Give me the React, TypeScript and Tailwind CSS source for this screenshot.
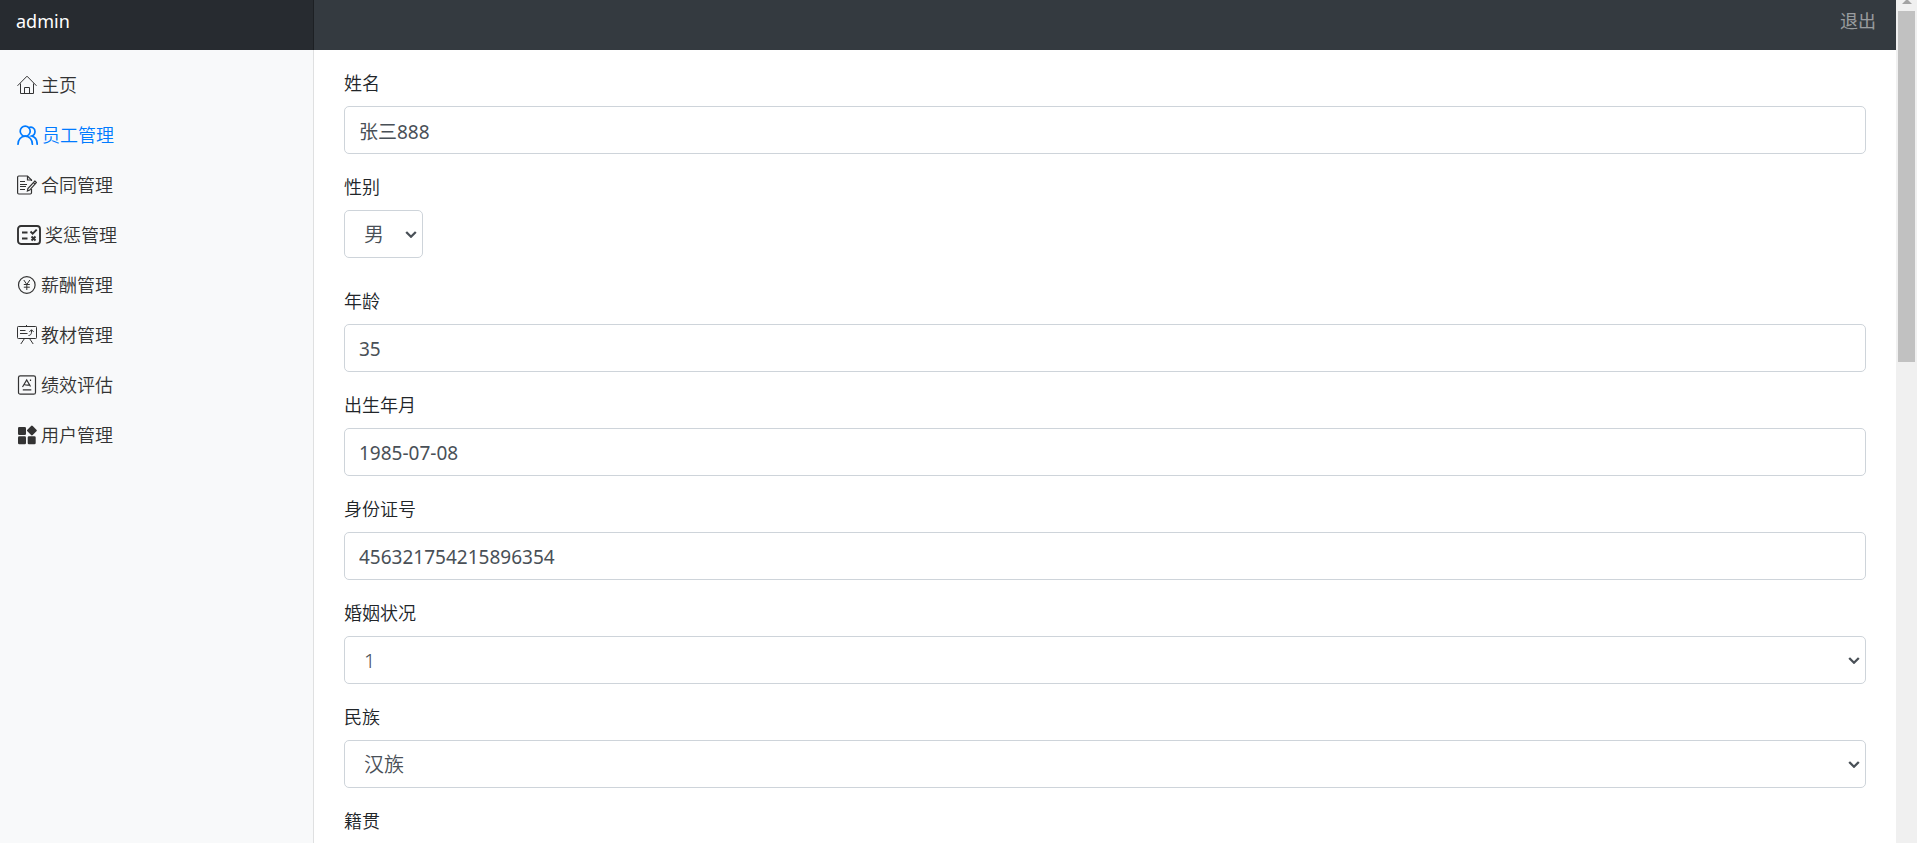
import { clsx } from "clsx";
import { useId, useState } from "react";
import type { ReactNode } from "react";

type NavItem = {
  label: string;
  icon: ReactNode;
  active?: boolean;
};

const HomeIcon = (
  <svg className="h-5 w-5" viewBox="0 0 20 20" fill="none" stroke="currentColor" strokeWidth="1" aria-hidden>
    <path d="M0.5 10.8 10 1.2l9.5 9.6" />
    <path d="M3.5 8.5v10h13v-10" />
    <path d="M7.5 18.5v-6h5v6" />
  </svg>
);

const UsersIcon = (
  <svg className="h-5 w-[21px]" viewBox="0 0 21 20" fill="none" stroke="currentColor" strokeWidth="1.7" strokeLinecap="round" aria-hidden>
    <circle cx="8.2" cy="6.2" r="5" />
    <path d="M1 19.2c0-4.6 3-8 7.2-8s7.2 3.4 7.2 8" />
    <path d="M12 2.5c3-1.2 6 .8 6 3.9 0 2.2-1.3 3.9-3.4 4.6 3.3.8 5.6 3.9 5.6 8.2" />
  </svg>
);

const ContractIcon = (
  <svg className="h-5 w-5" viewBox="0 0 20 20" fill="none" stroke="currentColor" strokeWidth="1.2" aria-hidden>
    <path d="M14.5 6V5l-4-4H1.8C1.1 1 .6 1.5.6 2.2v15.6c0 .7.5 1.2 1.2 1.2h11.5c.7 0 1.2-.5 1.2-1.2V14" />
    <path d="M10.5 1v4h4" />
    <path d="M3 6.5h5M3 9.5h7M3 11.5h6M3 14.5h5" />
    <path d="m17.8 6 1.7 1.5-6.8 7.6-2.3.9.5-2.5z" />
    <path d="m16.4 7.6 1.7 1.5" />
  </svg>
);

const RewardIcon = (
  <svg className="h-5 w-6" viewBox="0 0 24 20" fill="none" stroke="currentColor" strokeWidth="1.9" aria-hidden>
    <rect x="1" y="1" width="22" height="18" rx="3" />
    <path d="M5 7.5h5.5M5 13.5h5.5" />
    <path d="m13.5 6.5 2.2 2.2 4-4" />
    <path d="m14.5 11.5 4 4M18.5 11.5l-4 4" />
  </svg>
);

const SalaryIcon = (
  <svg className="h-5 w-5" viewBox="0 0 20 20" fill="none" stroke="currentColor" strokeWidth="1.2" aria-hidden>
    <circle cx="9.8" cy="10" r="8.3" />
    <path strokeWidth="1" d="M6.8 5 9.8 9.5l3-4.5M9.8 9.5V15M6.8 9.5h6M6.8 12.2h6" />
  </svg>
);

const BoardIcon = (
  <svg className="h-5 w-5" viewBox="0 0 20 20" fill="none" stroke="currentColor" strokeWidth="1" aria-hidden>
    <path d="M9.5 0v2" />
    <rect x="0.5" y="1.5" width="19" height="12" rx="0.8" />
    <path d="M3 5.5h5.5M3 8.5h7.5" />
    <path d="M11.5 10.5c1.8 0 3-1.3 3-3.3V5M12.4 6.9l2.1-2.2 2.1 2.2" />
    <path d="m7.5 13.5-3.7 5.5M12.5 13.5l3.7 5.500" />
  </svg>
);

const ReviewIcon = (
  <svg className="h-5 w-5" viewBox="0 0 20 20" fill="none" stroke="currentColor" strokeWidth="1.2" aria-hidden>
    <rect x="1.5" y="0.8" width="17" height="18.4" rx="1.8" />
    <path d="m5.5 12 4.2-7 3.8 6.5M7.2 9.5c2 .8 4 .8 6 .3M5.8 14.8h8.5M13.5 4.5v1.5" />
  </svg>
);

const AppsIcon = (
  <svg className="h-5 w-5" viewBox="0 0 20 20" fill="currentColor" aria-hidden>
    <rect x="1" y="2" width="8" height="8" rx="1.3" />
    <rect x="1" y="11.3" width="8" height="8" rx="1.3" />
    <rect x="10.7" y="11.3" width="8" height="8" rx="1.3" />
    <rect x="11.1" y="1.7" width="7.6" height="7.6" rx="1.2" transform="rotate(45 14.9 5.5)" />
  </svg>
);

const navItems: NavItem[] = [
  { label: "主页", icon: HomeIcon },
  { label: "员工管理", icon: UsersIcon, active: true },
  { label: "合同管理", icon: ContractIcon },
  { label: "奖惩管理", icon: RewardIcon },
  { label: "薪酬管理", icon: SalaryIcon },
  { label: "教材管理", icon: BoardIcon },
  { label: "绩效评估", icon: ReviewIcon },
  { label: "用户管理", icon: AppsIcon },
];

const labelClass = "mb-2.5 block font-[350] leading-[26px]";
const controlClass = "h-12 rounded-[5px] border border-[#ced4da] bg-white text-[#495057] outline-none focus:border-[#80bdff]";

function TextField({ label, initial }: { label: string; initial: string }) {
  const id = useId();
  const [value, setValue] = useState(initial);
  return (
    <div className="mb-5">
      <label htmlFor={id} className={labelClass}>
        {label}
      </label>
      <input
        id={id}
        type="text"
        value={value}
        onChange={(e) => setValue(e.target.value)}
        className={clsx(controlClass, "block w-full px-3.5 pt-0.5 text-[19px]")}
      />
    </div>
  );
}

function SelectField({ label, options, compact }: { label: string; options: string[]; compact?: boolean }) {
  const id = useId();
  return (
    <div className={compact ? "mb-[30px]" : "mb-5"}>
      <label htmlFor={id} className={labelClass}>
        {label}
      </label>
      <div className={clsx("relative", compact && "w-[79px]")}>
        <select
          id={id}
          className={clsx(controlClass, "block w-full appearance-none pl-[19px] pr-6 pt-0.5 text-[20px] font-[350]")}
        >
          {options.map((o) => (
            <option key={o}>{o}</option>
          ))}
        </select>
        <svg
          className="pointer-events-none absolute right-1.5 top-5 h-2 w-3 text-[#495057]"
          viewBox="0 0 12 8"
          fill="none"
          stroke="currentColor"
          strokeWidth="2.3"
          aria-hidden
        >
          <path d="M1.2 2 6 6.7 10.8 2" />
        </svg>
      </div>
    </div>
  );
}

export default function App() {
  return (
    <div className="flex h-screen overflow-hidden bg-white font-['Noto_Sans','Noto_Sans_CJK_SC',sans-serif] text-[18px] text-[#212529]">
      <div className="flex min-w-0 flex-1 flex-col">
        <header className="flex h-[50px] shrink-0 bg-[#343a40] leading-[26px]">
          <a href="#" className="w-[314px] shrink-0 bg-[#272b30] px-4 pt-2 text-white shadow-[inset_-1px_0_0_rgba(0,0,0,0.25)]">
            admin
          </a>
          <a href="#" className="ml-auto px-5 pt-2 text-white/50 hover:text-white/75">
            退出
          </a>
        </header>

        <div className="flex min-h-0 flex-1">
          <nav className="w-[314px] shrink-0 border-r border-[#dfe0e1] bg-[#f8f9fa] pt-2.5">
            <ul>
              {navItems.map((item) => (
                <li key={item.label}>
                  <a
                    href="#"
                    className={clsx(
                      "flex h-[50px] items-center gap-1 pl-[17px] font-[350]",
                      item.active ? "text-[#007bff]" : "text-[#333333]",
                    )}
                  >
                    {item.icon}
                    <span>{item.label}</span>
                  </a>
                </li>
              ))}
            </ul>
          </nav>

          <main className="min-w-0 flex-1 overflow-hidden px-[30px] pt-5">
            <form onSubmit={(e) => e.preventDefault()}>
              <TextField label="姓名" initial="张三888" />
              <SelectField label="性别" options={["男", "女"]} compact />
              <TextField label="年龄" initial="35" />
              <TextField label="出生年月" initial="1985-07-08" />
              <TextField label="身份证号" initial="456321754215896354" />
              <SelectField label="婚姻状况" options={["1", "0"]} />
              <SelectField label="民族" options={["汉族"]} />
              <TextField label="籍贯" initial="" />
            </form>
          </main>
        </div>
      </div>

      {/* page scrollbar */}
      <div className="flex w-[21px] shrink-0 flex-col items-center bg-[#f0f0f0]" aria-hidden>
        <svg className="mb-[7px] h-1 w-[10px] text-[#a3a3a3]" viewBox="0 0 10 4" fill="currentColor">
          <path d="M4 0h2l4 4H0z" />
        </svg>
        <div className="h-[351px] w-[17px] bg-[#c1c1c1]" />
      </div>
    </div>
  );
}
